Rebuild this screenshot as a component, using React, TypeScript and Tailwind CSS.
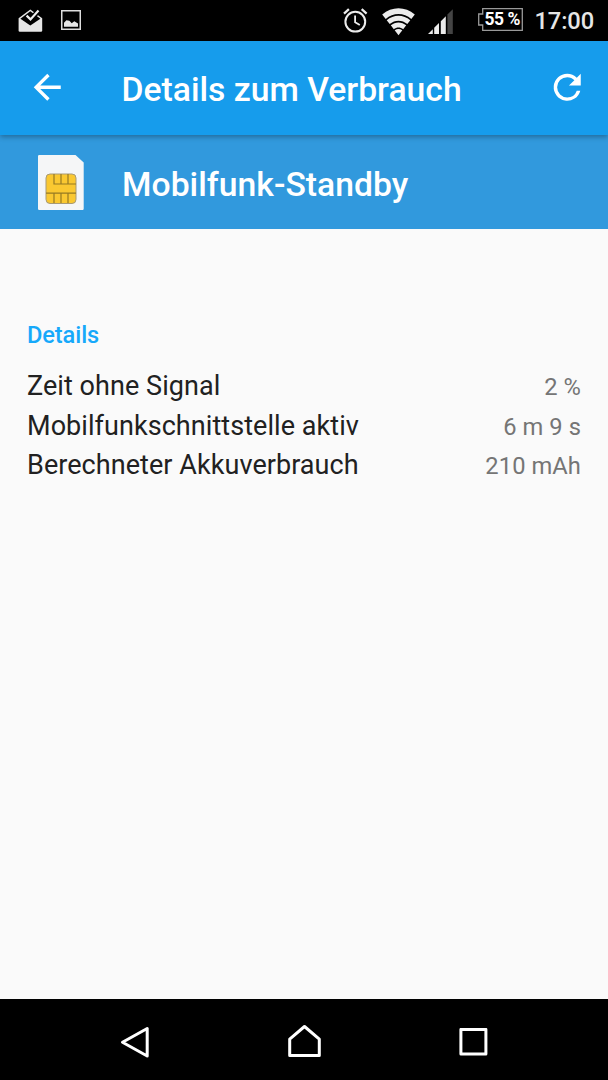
import React from "react";

const rows = [
  { label: "Zeit ohne Signal", value: "2 %" },
  { label: "Mobilfunkschnittstelle aktiv", value: "6 m 9 s" },
  { label: "Berechneter Akkuverbrauch", value: "210 mAh" },
];

function StatusBar() {
  return (
    <div className="flex h-[40.5px] shrink-0 items-start bg-black">
      <svg className="ml-[18px] mt-[8px] h-[25px] w-[25px]" viewBox="0 0 25 25" fill="none">
        <path d="M.6 10.2 12.3 1.6 24.2 10.2V22.5a1.2 1.2 0 0 1-1.2 1.2H1.8A1.2 1.2 0 0 1 .6 22.5z" fill="#e6e6e6" />
        <path d="M2.4 10.7 12.3 3.2 22.4 10.7 12.3 17.6z" fill="#000" />
        <path d="m9 7.8 3.6 3.6 8-8.6" stroke="#000" strokeWidth="5" />
        <path d="m8.6 7.6 3.9 3.8 8-8.8" stroke="#eee" strokeWidth="2.2" />
      </svg>
      <svg className="ml-[18px] mt-[10px] h-[20px] w-[20px]" viewBox="0 0 20 20" fill="none">
        <rect x="0.75" y="0.75" width="18.5" height="18.5" stroke="#ddd" strokeWidth="1.5" />
        <path d="M3 16.7v-4l2.4-2.5 3 .6 2.3 2.4 2.6-1.9 3.7 2.3v3.1z" fill="#e6e6e6" />
      </svg>
      <svg className="ml-[262px] mt-[8px] h-[25px] w-[25px]" viewBox="0 0 25 25" fill="none" stroke="#ececec">
        <circle cx="12.3" cy="13.7" r="9.9" strokeWidth="2" />
        <path d="M12.1 7.6v6.6l4.7 2.9" strokeWidth="1.8" />
        <path d="M1 5.6 5.9 1.2M18.7 1.2l4.9 4.4" strokeWidth="2.3" />
      </svg>
      <svg className="ml-[14px] mt-[8px] h-[28px] w-[33px]" viewBox="0 0 33 28" fill="#ececec">
        <path d="M.2 6.5C9.8-2 23.2-2 32.8 6.5L29.3 11C21.8 4.3 11.2 4.3 3.7 11z" />
        <path d="M4.7 12.3C11.5 6.3 21.5 6.3 28.3 12.3L25.3 16.1C20.1 11.5 12.9 11.5 7.7 16.1z" />
        <path d="M8.8 17.3C13.2 13.4 19.8 13.4 24.2 17.3L21.2 21.2C18.4 18.8 14.6 18.8 11.8 21.2z" />
        <path d="M12.7 22.3Q16.5 19.5 20.3 22.3L16.5 27.3z" />
      </svg>
      <svg className="ml-[13px] mt-[9px] h-[25px] w-[25px]" viewBox="0 0 25 25">
        <path d="M0 25 4.8 20.2V25zM6.2 25v-6.2l4.8-4.8V25zM12.8 25V12.2l5-5V25z" fill="#ececec" />
        <path d="M19.4 25V5.6L24.8.2V25z" fill="#444" />
      </svg>
      <div className="relative ml-[25px] mt-[8px] h-[23px] w-[45px]">
        <svg className="absolute inset-0 h-[23px] w-[45px]" viewBox="0 0 45 23" fill="none">
          <path d="M4.7.7H44.3V22.3H4.7V17H.7V6h4z" stroke="#999" strokeWidth="1.3" />
        </svg>
        <span className="absolute left-[6.5px] top-0 whitespace-nowrap text-[17.5px] font-bold leading-[22px] tracking-[-0.5px] text-white">55 %</span>
      </div>
      <span className="ml-[11.5px] mt-[7px] whitespace-nowrap text-[23.7px] font-medium leading-[28px] tracking-[-0.1px] text-[#e6e6e6]">17:00</span>
    </div>
  );
}

function AppBar() {
  return (
    <header className="relative z-10 flex h-[94.4px] shrink-0 items-center bg-[#169cec] shadow-[0_2px_5px_rgba(0,0,0,0.3)]">
      <svg className="-mt-px ml-[27px] h-[40.5px] w-[40.5px]" viewBox="0 0 24 24" fill="#fff">
        <path d="M20 11H7.83l5.59-5.59L12 4l-8 8 8 8 1.41-1.41L7.83 13H20v-2z" />
      </svg>
      <h1 className="ml-[54px] mt-[4px] whitespace-nowrap text-[33.7px] font-medium leading-[40px] text-white">Details zum Verbrauch</h1>
      <svg className="-mt-px ml-auto mr-[20.5px] h-[40.5px] w-[40.5px]" viewBox="0 0 24 24" fill="#fff">
        <path d="M17.65 6.35A7.958 7.958 0 0 0 12 4a8 8 0 1 0 7.73 10h-2.08A5.99 5.99 0 0 1 12 18a6 6 0 1 1 0-12c1.66 0 3.14.69 4.22 1.78L13 11h7V4l-2.35 2.35z" />
      </svg>
    </header>
  );
}

function SimIcon() {
  return (
    <svg className="ml-[37px] mt-[19px] h-[57px] w-[48px] shrink-0" viewBox="0 0 48 57" fill="none">
      <path d="M1 2.2A1.2 1.2 0 0 1 2.2 1H38.5L46.7 8.5V54.8A1.2 1.2 0 0 1 45.5 56H2.2A1.2 1.2 0 0 1 1 54.8z" fill="#f5f6f7" />
      <rect x="9" y="20" width="30" height="29.5" rx="4" fill="#fac831" stroke="#a79a76" />
      <path d="M17 20v10h22M24 20v10M31 20v10M9 39.2h30M17 39.2V49M24 39.2V49M31 39.2V49" stroke="#967a23" strokeWidth="1.2" />
    </svg>
  );
}

export default function App() {
  return (
    <div className="flex h-[1080px] w-[608px] flex-col overflow-hidden bg-[#fafafa] font-['Roboto',sans-serif]">
      <StatusBar />
      <AppBar />
      <section className="flex h-[94.5px] shrink-0 items-start bg-[#3199dd]">
        <SimIcon />
        <h2 className="ml-[37px] mt-[30px] whitespace-nowrap text-[33.7px] font-medium leading-[40px] tracking-[0.03px] text-white">Mobilfunk-Standby</h2>
      </section>
      <main className="flex-1 px-[27px] pt-[91.2px]">
        <h3 className="text-[23.6px] font-medium leading-[28px] tracking-[-0.1px] text-[#16a9fa]">Details</h3>
        <dl className="mt-[17.4px]">
          {rows.map((row) => (
            <div key={row.label} className="flex h-[39.7px] items-baseline justify-between whitespace-nowrap leading-[40px]">
              <dt className="text-[27px] tracking-[0.06px] text-[#212121]">{row.label}</dt>
              <dd className="text-[23.7px] tracking-[0.08px] text-[#757575]">{row.value}</dd>
            </div>
          ))}
        </dl>
      </main>
      <nav className="flex h-[81px] shrink-0 items-start bg-black">
        <svg className="ml-[120px] mt-[27px] h-[33px] w-[30px]" viewBox="0 0 30 33" fill="none">
          <path d="M27.2 2.5V30L2.5 16.3z" stroke="#fff" strokeWidth="3" strokeLinejoin="round" />
        </svg>
        <svg className="ml-[137px] mt-[25px] h-[36px] w-[35px]" viewBox="0 0 35 36" fill="none">
          <path d="M2.7 15.2 17.5 2.5 32.3 15.2V31.6H2.7z" stroke="#fff" strokeWidth="3" strokeLinejoin="round" />
        </svg>
        <svg className="ml-[137px] mt-[29px] h-[29px] w-[29px]" viewBox="0 0 29 29" fill="none">
          <rect x="1.9" y="1.4" width="25" height="24.5" stroke="#fff" strokeWidth="3" strokeLinejoin="round" />
        </svg>
      </nav>
    </div>
  );
}
